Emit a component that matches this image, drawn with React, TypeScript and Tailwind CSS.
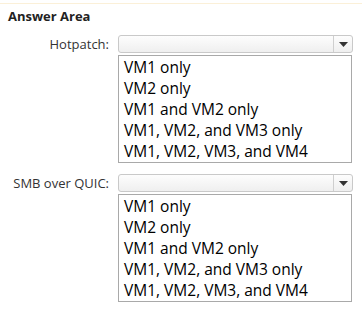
import React from 'react';

const options = [
  'VM1 only',
  'VM2 only',
  'VM1 and VM2 only',
  'VM1, VM2, and VM3 only',
  'VM1, VM2, VM3, and VM4',
];

interface DropRowProps {
  label: string;
}

// One labelled dropdown with its option list shown open below it
const DropRow: React.FC<DropRowProps> = ({ label }) => {
  return (
    <div className="flex items-start">
      <div className="w-[110px] text-right text-[13px] leading-[18px] text-[#333] pr-[1px]">
        {label}
      </div>
      <div className="ml-[8px] w-[235px]">
        <div className="h-[18px] flex rounded-[3px] border border-[#c9c9c9] bg-gradient-to-b from-[#fdfdfd] to-[#efefef]">
          <div className="flex-1" />
          <div className="w-[19px] border-l border-[#cfcfcf] flex items-center justify-center">
            <svg width="9" height="5" viewBox="0 0 9 5">
              <path d="M0 0h9L4.5 5z" fill="#333" />
            </svg>
          </div>
        </div>
        <ul className="mt-[2px] h-[108px] w-[234px] border border-[#a9a9a9] bg-white pl-[5px] pt-[1px]">
          {options.map((o) => (
            <li key={o} className="text-[15.5px] leading-[21px] text-black">
              {o}
            </li>
          ))}
        </ul>
      </div>
    </div>
  );
};

export default function App() {
  return (
    <div className="w-[362px] h-[311px] bg-white overflow-hidden" style={{ fontFamily: '"Open Sans", "Noto Sans", sans-serif' }}>
      <div className="h-px mt-[3px] bg-[#fbf0d8]" />
      <div className="pl-[8px] pt-[3px] text-[13px] leading-[18px] font-bold text-[#222]">Answer Area</div>
      <div className="mt-[10px] flex flex-col gap-[11px]">
        <DropRow label="Hotpatch:" />
        <DropRow label="SMB over QUIC:" />
      </div>
    </div>
  );
}
